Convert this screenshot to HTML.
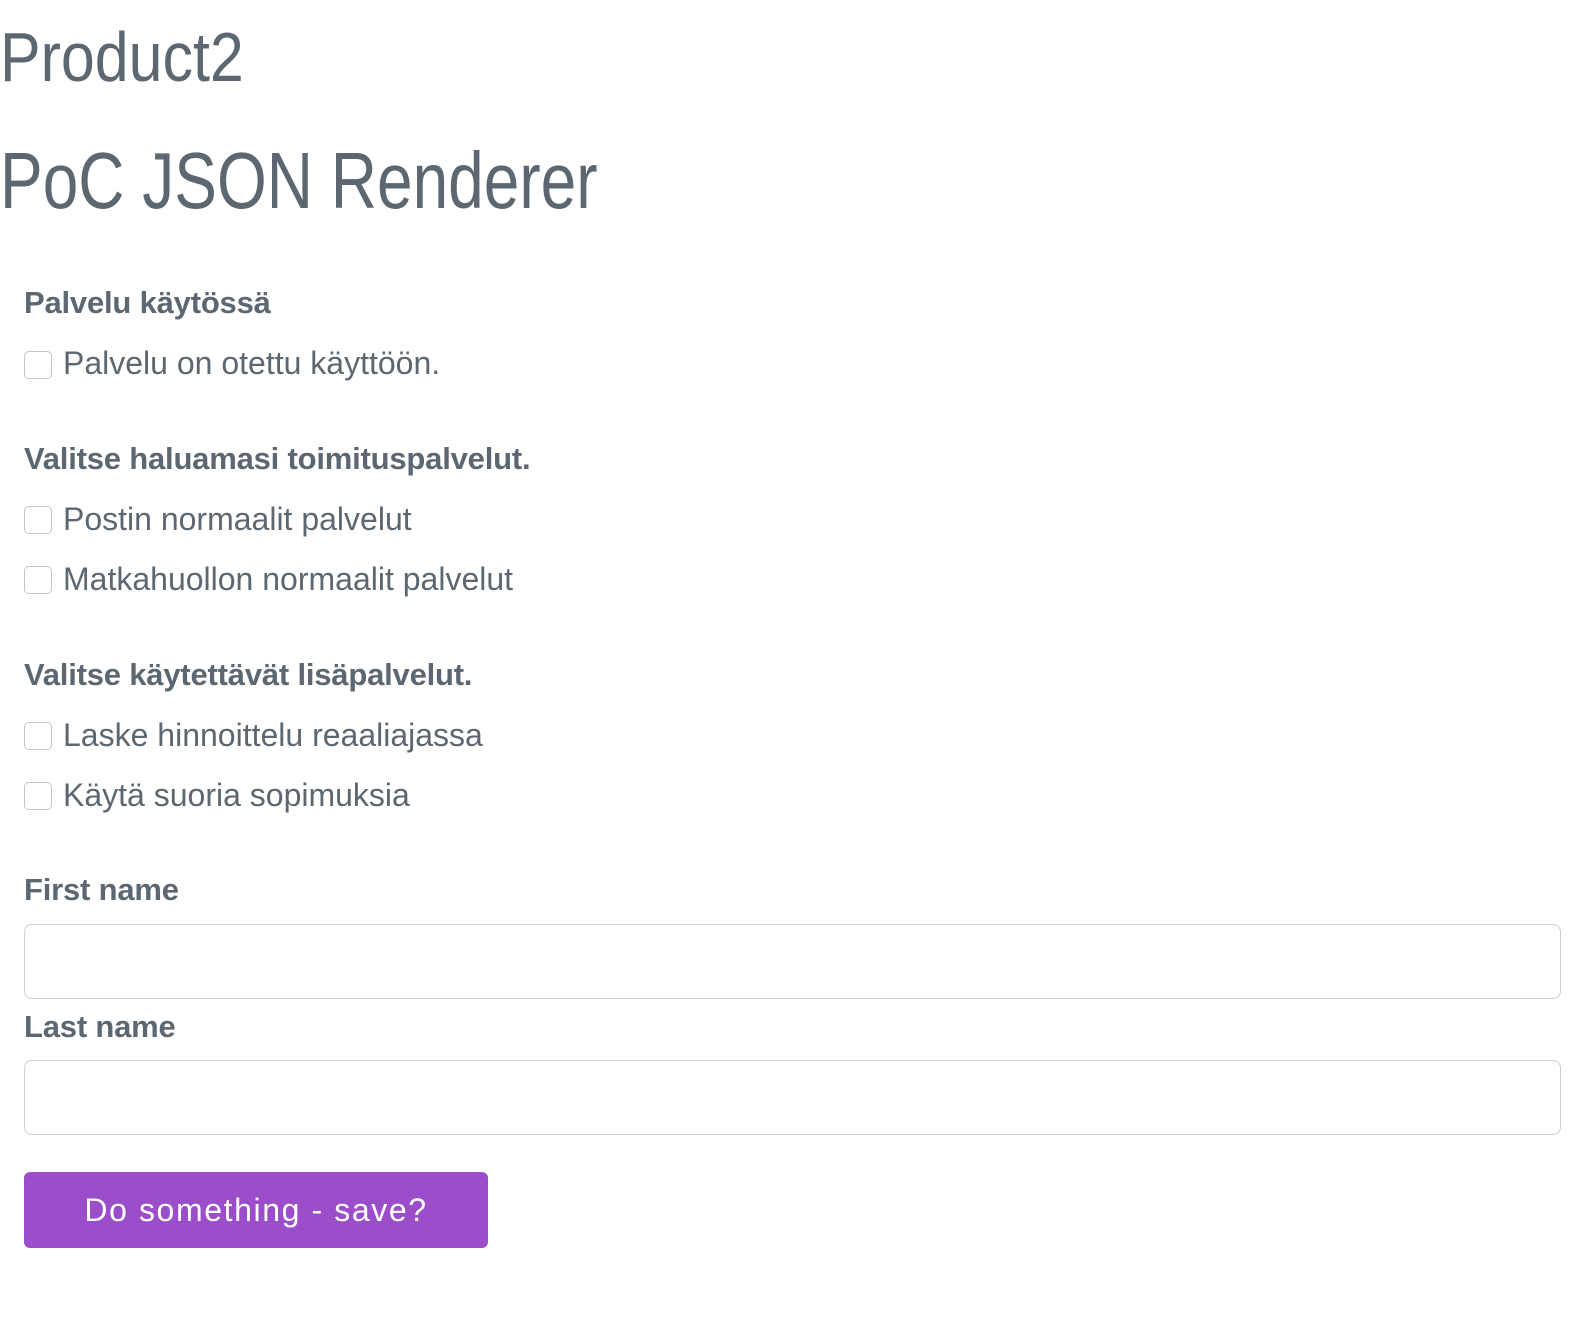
<!DOCTYPE html>
<html><head><meta charset="utf-8"><style>
body{margin:0;width:1580px;height:1322px;background:#fff;position:relative;overflow:hidden;font-family:"Liberation Sans",sans-serif;color:#5c6771}
.t{position:absolute;white-space:nowrap;line-height:1;transform-origin:0 0}
.b{font-weight:bold;font-size:31px;left:24px;letter-spacing:-0.2px}
.l{font-size:32px;left:63px;letter-spacing:0px}
.cb{position:absolute;left:24px;width:26px;height:26px;border:1.5px solid #c4c4c4;border-radius:5px;background:#fff}
.in{position:absolute;left:24px;width:1535px;height:73px;border:1.5px solid #cfcfcf;border-radius:8px}
</style></head><body>
<div class="t" style="left:0;top:22px;font-size:70px;transform:scaleX(0.87);font-weight:300">Product2</div>
<div class="t" style="left:0;top:141px;font-size:80px;transform:scaleX(0.8)">PoC JSON Renderer</div>

<div class="t b" style="top:287px">Palvelu käytössä</div>
<div class="cb" style="top:351px"></div>
<div class="t l" style="top:347px">Palvelu on otettu käyttöön.</div>

<div class="t b" style="top:443px">Valitse haluamasi toimituspalvelut.</div>
<div class="cb" style="top:506px"></div>
<div class="t l" style="top:503px">Postin normaalit palvelut</div>
<div class="cb" style="top:566px"></div>
<div class="t l" style="top:563px">Matkahuollon normaalit palvelut</div>

<div class="t b" style="top:659px">Valitse käytettävät lisäpalvelut.</div>
<div class="cb" style="top:722px"></div>
<div class="t l" style="top:719px">Laske hinnoittelu reaaliajassa</div>
<div class="cb" style="top:782px"></div>
<div class="t l" style="top:779px">Käytä suoria sopimuksia</div>

<div class="t b" style="top:874px">First name</div>
<div class="in" style="top:924px"></div>
<div class="t b" style="top:1011px">Last name</div>
<div class="in" style="top:1060px"></div>

<div style="position:absolute;left:24px;top:1172px;width:464px;height:76px;background:#9b4dca;border-radius:6px;color:#fff;font-size:32px;line-height:76px;text-align:center;letter-spacing:1.6px">Do something - save?</div>
</body></html>
